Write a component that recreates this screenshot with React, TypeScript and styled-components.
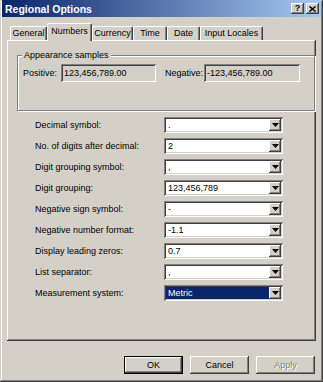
import React from 'react'
import styled, { createGlobalStyle, css } from 'styled-components'

const GlobalStyle = createGlobalStyle`
  html, body {
    margin: 0;
    padding: 0;
    background: #d4d0c8;
  }
  body {
    font-family: "Liberation Sans", Arial, sans-serif;
    font-size: 9px;
    color: #000;
  }
`

const raised = css`
  box-shadow: inset -1px -1px #404040, inset 1px 1px #fff,
    inset -2px -2px #808080, inset 2px 2px #d4d0c8;
`

const sunken = css`
  box-shadow: inset 1px 1px #808080, inset -1px -1px #fff,
    inset 2px 2px #404040, inset -2px -2px #d4d0c8;
`

const Window = styled.div`
  width: 323px;
  height: 382px;
  box-sizing: border-box;
  padding: 0 2px 2px;
  background: #d4d0c8;
  box-shadow: inset -1px -1px #404040, inset 1px 1px #d4d0c8,
    inset -2px -2px #808080, inset 2px 2px #fff;
  display: flex;
  flex-direction: column;
`

const TitleBar = styled.div`
  height: 17px;
  display: flex;
  align-items: center;
  justify-content: space-between;
  padding: 0 2px 0 3px;
  background: linear-gradient(to right, #0a246a, #a6caf0);
`

const Title = styled.span`
  color: #fff;
  font-weight: bold;
  font-size: 10.5px;
`

const TitleButtons = styled.div`
  display: flex;
  gap: 2px;
`

const TitleButton = styled.div`
  width: 13px;
  height: 11px;
  ${raised};
  background: #d4d0c8;
  display: flex;
  align-items: center;
  justify-content: center;
  font-weight: bold;
  font-size: 9px;
  line-height: 11px;
`

const TabStrip = styled.div`
  display: flex;
  align-items: flex-end;
  height: 17px;
  margin: 6px 5px 0;
  padding-left: 3px;
  position: relative;
  z-index: 1;
`

const Tab = styled.div<{ $w: number; $active?: boolean }>`
  width: ${(p) => p.$w}px;
  height: ${(p) => (p.$active ? 18 : 14)}px;
  margin-bottom: ${(p) => (p.$active ? -1 : 0)}px;
  box-sizing: border-box;
  background: #d4d0c8;
  border-top: 1px solid #fff;
  border-left: 1px solid #fff;
  border-right: 1px solid #404040;
  border-radius: 2px 2px 0 0;
  box-shadow: inset -1px 0 #808080;
  display: flex;
  justify-content: center;
  padding-top: ${(p) => (p.$active ? 2 : 1)}px;
  line-height: 11px;
`

const Panel = styled.div`
  height: 301px;
  margin: 0 5px;
  box-sizing: border-box;
  padding: 10px 0 0 10px;
  background: #d4d0c8;
  box-shadow: inset -1px -1px #404040, inset 1px 1px #fff,
    inset -2px -2px #808080;
  display: flex;
  flex-direction: column;
`

const GroupBox = styled.fieldset`
  width: 288px;
  height: 61px;
  box-sizing: border-box;
  margin: 0;
  padding: 0 5px;
  border: 1px solid #808080;
  box-shadow: 1px 1px 0 #fff, inset 1px 1px 0 #fff;
`

const Legend = styled.legend`
  padding: 0 2px;
  margin-left: -1px;
  line-height: 11px;
  background: #d4d0c8;
`

const SampleRow = styled.div`
  display: flex;
  align-items: center;
  margin-top: 3px;
`

const SampleLabel = styled.span<{ $w: number }>`
  width: ${(p) => p.$w}px;
`

const SampleBox = styled.div<{ $w: number }>`
  width: ${(p) => p.$w}px;
  height: 18px;
  box-sizing: border-box;
  ${sunken};
  padding-left: 3px;
  line-height: 18px;
  margin-right: 9px;
`

const Settings = styled.div`
  display: grid;
  grid-template-columns: 129px 119px;
  row-gap: 5px;
  margin: 6px 0 0 18px;
  align-items: center;
`

const Combo = styled.div`
  height: 16px;
  box-sizing: border-box;
  padding: 2px;
  background: #fff;
  ${sunken};
  display: flex;
`

const ComboValue = styled.div<{ $focused?: boolean }>`
  flex: 1;
  padding-left: 2px;
  line-height: 12px;
  background: ${(p) => (p.$focused ? '#0a246a' : '#fff')};
  color: ${(p) => (p.$focused ? '#fff' : '#000')};
`

const ComboArrow = styled.div`
  width: 12px;
  height: 12px;
  background: #d4d0c8;
  ${raised};
  display: flex;
  align-items: center;
  justify-content: center;
`

const ButtonRow = styled.div`
  display: flex;
  justify-content: flex-end;
  gap: 7px;
  margin: 15px 6px 0 0;
`

const Button = styled.div<{ $default?: boolean; $disabled?: boolean }>`
  width: 59px;
  height: 18px;
  box-sizing: border-box;
  background: #d4d0c8;
  display: flex;
  align-items: center;
  justify-content: center;
  ${(p) =>
    p.$default
      ? css`
          box-shadow: inset 0 0 0 1px #000, inset -2px -2px #404040,
            inset 2px 2px #fff, inset -3px -3px #808080;
        `
      : raised};
  color: ${(p) => (p.$disabled ? '#808080' : '#000')};
  text-shadow: ${(p) => (p.$disabled ? '1px 1px #fff' : 'none')};
`

const Arrow = () => (
  <svg width="7" height="4" viewBox="0 0 7 4">
    <path d="M0 0h7L3.5 4z" fill="#000" />
  </svg>
)

const CloseGlyph = () => (
  <svg width="7" height="6" viewBox="0 0 7 6">
    <path d="M0.5 0.5L6.5 5.5M6.5 0.5L0.5 5.5" stroke="#000" strokeWidth="1.5" />
  </svg>
)

const tabs = [
  { label: 'General', w: 37 },
  { label: 'Numbers', w: 45, active: true },
  { label: 'Currency', w: 41 },
  { label: 'Time', w: 34 },
  { label: 'Date', w: 33 },
  { label: 'Input Locales', w: 63 },
]

const settings = [
  { label: 'Decimal symbol:', value: '.' },
  { label: 'No. of digits after decimal:', value: '2' },
  { label: 'Digit grouping symbol:', value: ',' },
  { label: 'Digit grouping:', value: '123,456,789' },
  { label: 'Negative sign symbol:', value: '-' },
  { label: 'Negative number format:', value: '-1.1' },
  { label: 'Display leading zeros:', value: '0.7' },
  { label: 'List separator:', value: ',' },
  { label: 'Measurement system:', value: 'Metric', focused: true },
]

export default function App() {
  return (
    <>
      <GlobalStyle />
      <Window>
        <TitleBar>
          <Title>Regional Options</Title>
          <TitleButtons>
            <TitleButton>?</TitleButton>
            <TitleButton>
              <CloseGlyph />
            </TitleButton>
          </TitleButtons>
        </TitleBar>
        <TabStrip>
          {tabs.map((t) => (
            <Tab key={t.label} $w={t.w} $active={t.active}>
              {t.label}
            </Tab>
          ))}
        </TabStrip>
        <Panel>
          <GroupBox>
            <Legend>Appearance samples</Legend>
            <SampleRow>
              <SampleLabel $w={38}>Positive:</SampleLabel>
              <SampleBox $w={95}>123,456,789.00</SampleBox>
              <SampleLabel $w={39}>Negative:</SampleLabel>
              <SampleBox $w={96}>-123,456,789.00</SampleBox>
            </SampleRow>
          </GroupBox>
          <Settings>
            {settings.map((s) => (
              <React.Fragment key={s.label}>
                <span>{s.label}</span>
                <Combo>
                  <ComboValue $focused={s.focused}>{s.value}</ComboValue>
                  <ComboArrow>
                    <Arrow />
                  </ComboArrow>
                </Combo>
              </React.Fragment>
            ))}
          </Settings>
        </Panel>
        <ButtonRow>
          <Button $default>OK</Button>
          <Button>Cancel</Button>
          <Button $disabled>Apply</Button>
        </ButtonRow>
      </Window>
    </>
  )
}
